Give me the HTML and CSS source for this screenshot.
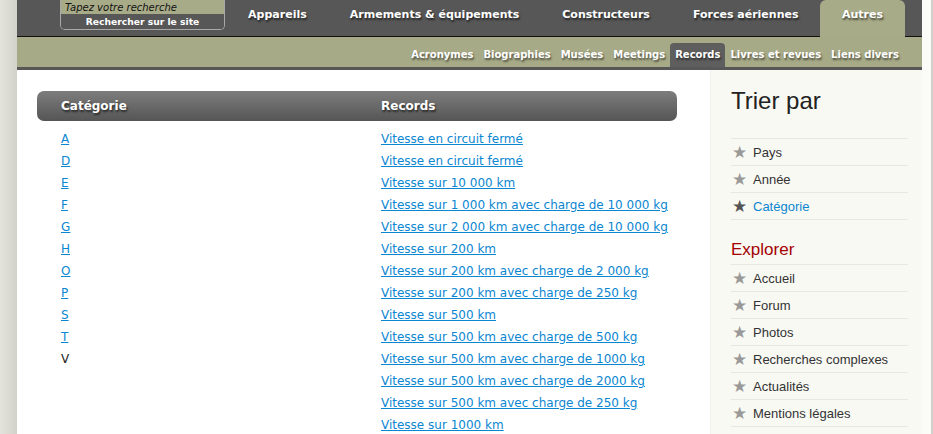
FILE: index.html
```html
<!DOCTYPE html>
<html lang="fr">
<head>
  <meta charset="UTF-8">
  <meta name="viewport" content="width=device-width, initial-scale=1.0">
  <title>Records</title>
  <link rel="stylesheet" href="styles.css">
</head>
<body>
  <div class="page">
    <!-- Barre principale -->
    <div class="topbar">
      <form class="search">
        <input type="text" class="search-input" placeholder="Tapez votre recherche">
        <button type="button" class="search-button">Rechercher sur le site</button>
      </form>
      <ul class="nav">
        <li><a href="#">Appareils</a></li>
        <li><a href="#">Armements &amp; équipements</a></li>
        <li><a href="#">Constructeurs</a></li>
        <li><a href="#">Forces aériennes</a></li>
        <li class="active"><a href="#">Autres</a></li>
      </ul>
    </div>

    <!-- Sous-menu -->
    <div class="subbar">
      <ul class="subnav">
        <li><a href="#">Acronymes</a></li>
        <li><a href="#">Biographies</a></li>
        <li><a href="#">Musées</a></li>
        <li><a href="#">Meetings</a></li>
        <li class="active"><a href="#">Records</a></li>
        <li><a href="#">Livres et revues</a></li>
        <li><a href="#">Liens divers</a></li>
      </ul>
    </div>

    <div class="main">
      <div class="content">
        <table class="records">
          <thead>
            <tr><th>Catégorie</th><th>Records</th></tr>
          </thead>
          <tbody>
            <tr><td><a href="#">A</a></td><td><a href="#">Vitesse en circuit fermé</a></td></tr>
            <tr><td><a href="#">D</a></td><td><a href="#">Vitesse en circuit fermé</a></td></tr>
            <tr><td><a href="#">E</a></td><td><a href="#">Vitesse sur 10 000 km</a></td></tr>
            <tr><td><a href="#">F</a></td><td><a href="#">Vitesse sur 1 000 km avec charge de 10 000 kg</a></td></tr>
            <tr><td><a href="#">G</a></td><td><a href="#">Vitesse sur 2 000 km avec charge de 10 000 kg</a></td></tr>
            <tr><td><a href="#">H</a></td><td><a href="#">Vitesse sur 200 km</a></td></tr>
            <tr><td><a href="#">O</a></td><td><a href="#">Vitesse sur 200 km avec charge de 2 000 kg</a></td></tr>
            <tr><td><a href="#">P</a></td><td><a href="#">Vitesse sur 200 km avec charge de 250 kg</a></td></tr>
            <tr><td><a href="#">S</a></td><td><a href="#">Vitesse sur 500 km</a></td></tr>
            <tr><td><a href="#">T</a></td><td><a href="#">Vitesse sur 500 km avec charge de 500 kg</a></td></tr>
            <tr><td>V</td><td><a href="#">Vitesse sur 500 km avec charge de 1000 kg</a></td></tr>
            <tr><td></td><td><a href="#">Vitesse sur 500 km avec charge de 2000 kg</a></td></tr>
            <tr><td></td><td><a href="#">Vitesse sur 500 km avec charge de 250 kg</a></td></tr>
            <tr><td></td><td><a href="#">Vitesse sur 1000 km</a></td></tr>
          </tbody>
        </table>
      </div>

      <div class="sidebar">
        <h2>Trier par</h2>
        <ul class="side-list">
          <li><a href="#">Pays</a></li>
          <li><a href="#">Année</a></li>
          <li class="current"><a href="#">Catégorie</a></li>
        </ul>
        <h3>Explorer</h3>
        <ul class="side-list">
          <li><a href="#">Accueil</a></li>
          <li><a href="#">Forum</a></li>
          <li><a href="#">Photos</a></li>
          <li><a href="#">Recherches complexes</a></li>
          <li><a href="#">Actualités</a></li>
          <li><a href="#">Mentions légales</a></li>
        </ul>
      </div>
    </div>
  </div>
</body>
</html>
```

FILE: styles.css
```css
body {
  margin: 0;
  padding: 0;
  background: linear-gradient(to right, #e4e4de 0, #d2d2ca 17px, #d2d2ca 100%);
  font-family: "DejaVu Sans", Verdana, sans-serif;
  color: #333;
  overflow: hidden;
}

ul {
  list-style: none;
  margin: 0;
  padding: 0;
}

a {
  text-decoration: none;
  white-space: nowrap;
}

.page {
  margin-left: 17px;
  width: 905px;
  border-right: 9px solid #fbfbf7;
  min-height: 434px;
  background-color: #fff;
}

/* Barre du haut */
.topbar {
  display: flex;
  height: 36px;
  background-color: #575757;
  border-bottom: 1px solid #111;
}

.search {
  display: flex;
  flex-direction: column;
  flex-shrink: 0;
  width: 163px;
  height: 29px;
  margin: 0 0 0 43px;
  border: 1px solid #a9a9a9;
  border-top: none;
  border-radius: 0 0 5px 5px;
  overflow: hidden;
}

.search-input {
  height: 14px;
  margin: 0;
  padding: 0 4px;
  border: none;
  background-color: #a8ab88;
  font-family: "DejaVu Sans", Verdana, sans-serif;
  font-size: 10px;
  font-style: italic;
}

.search-input::placeholder {
  color: #111;
}

.search-button {
  flex: 1;
  margin: 0;
  padding: 0;
  border: none;
  background-color: #575757;
  color: #fff;
  font-family: "DejaVu Sans", Verdana, sans-serif;
  font-size: 9.2px;
  font-weight: bold;
}

.nav {
  display: flex;
  margin-left: auto;
  margin-right: 17px;
}

.nav li a {
  display: block;
  height: 37px;
  line-height: 29px;
  padding: 0 21.5px;
  color: #fff;
  font-size: 11px;
  font-weight: bold;
  text-shadow: 1px 2px 2px rgba(0, 0, 0, 0.6);
}

.nav li.active a {
  background-color: #a8ab88;
  border-radius: 6px 6px 0 0;
  width: 42px;
  text-align: center;
}

/* Sous-menu */
.subbar {
  display: flex;
  justify-content: flex-end;
  height: 30px;
  background-color: #a7aa87;
  border-bottom: 3px solid #575757;
}

.subnav {
  display: flex;
  align-items: flex-end;
  margin-right: 18px;
}

.subnav li a {
  display: block;
  height: 24px;
  line-height: 23px;
  padding: 0 5px;
  color: #fff;
  font-size: 10px;
  font-weight: bold;
  text-shadow: 1px 2px 2px rgba(0, 0, 0, 0.55);
}

.subnav li.active a {
  background-color: #5e5e5e;
  border-radius: 4px 4px 0 0;
}

/* Contenu */
.main {
  display: flex;
}

.content {
  flex: 1;
  padding: 21px 33px 0 20px;
}

.records {
  width: 640px;
  border-collapse: collapse;
  font-size: 12px;
}

.records th {
  height: 30px;
  padding: 0 0 0 24px;
  text-align: left;
  color: #fff;
  font-size: 12px;
  background: linear-gradient(#7d7d7d, #555);
  text-shadow: 1px 2px 2px rgba(0, 0, 0, 0.6);
}

.records th:first-child {
  width: 296px;
  border-radius: 7px 0 0 7px;
}

.records th:last-child {
  border-radius: 0 7px 7px 0;
}

.records td {
  height: 22px;
  padding: 0 0 0 24px;
  color: #222;
}

.records tbody tr:first-child td {
  padding-top: 7px;
}

.records td a {
  color: #0b86d1;
  text-decoration: underline;
}

/* Barre latérale */
.sidebar {
  width: 178px;
  padding: 0 14px 0 20px;
  background-color: #f9f9f3;
  border-left: 1px solid #f0f0e8;
  font-family: "Liberation Sans", Arial, sans-serif;
  min-height: 364px;
}

.sidebar h2 {
  margin: 17px 0 23px;
  font-size: 24px;
  font-weight: normal;
  color: #222;
}

.sidebar h3 {
  margin: 20px 0 4px;
  font-size: 17px;
  font-weight: normal;
  color: #a50000;
}

.side-list li {
  border-top: 1px solid #e8e8e2;
  height: 26px;
  line-height: 26px;
  font-size: 13px;
}

.side-list li:last-child {
  border-bottom: 1px solid #e8e8e2;
}

.side-list li a {
  color: #333;
}

.side-list li a::before {
  content: "★";
  display: inline-block;
  width: 21px;
  padding-left: 1px;
  color: #999;
  font-family: "DejaVu Sans", sans-serif;
  font-size: 17px;
  vertical-align: -1px;
}

.side-list li.current a {
  color: #0b86d1;
}

.side-list li.current a::before {
  color: #555;
}
```
